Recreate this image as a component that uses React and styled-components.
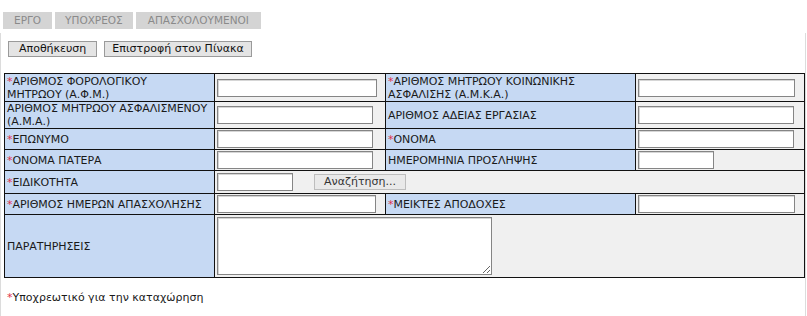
import React from "react";
import styled, { createGlobalStyle } from "styled-components";

const Global = createGlobalStyle`
  html, body { margin: 0; padding: 0; background: #fff; }
  body { font-family: "DejaVu Sans", Verdana, sans-serif; font-size: 11px; color: #111; }
`;

const Page = styled.div`
  width: 807px;
  height: 316px;
  overflow: hidden;
  box-sizing: border-box;
  padding-top: 12px;
`;

const Tabs = styled.div`
  display: flex;
  gap: 3px;
  padding-left: 3px;
  height: 17px;
`;

const Tab = styled.div`
  background: #d4d4d4;
  color: #8a8a8a;
  font-size: 10.5px;
  line-height: 17px;
  padding: 0 ${(p) => p.$pad}px;
`;

const Panel = styled.div`
  margin-top: 4px;
  margin-right: 1px;
  border-left: 1px solid #dcdcdc;
  border-right: 1px solid #dcdcdc;
  padding: 8px 0 0 3px;
  height: 300px;
`;

const Toolbar = styled.div`
  display: flex;
  gap: 7px;
  padding-left: 4px;
`;

const Button = styled.button`
  font-family: "DejaVu Sans", Verdana, sans-serif;
  font-size: 11px;
  color: #111;
  background: #e4e4e4;
  border: 1px solid #9a9a9a;
  height: 16px;
  padding: 0 ${(p) => p.$pad || 10}px;
  line-height: 14px;
  margin: 0;
`;

const SearchButton = styled(Button)`
  background: #e9e9e9;
  border-color: #bdbdbd;
  color: #333;
  margin-left: 21px;
  padding: 0 9px;
`;

const Table = styled.table`
  margin-top: 16px;
  border-collapse: collapse;
  table-layout: fixed;
  width: 800px;
  border: 1px solid #111;
`;

const Row = styled.tr`
  height: ${(p) => p.$h}px;
`;

const Label = styled.td`
  background: #c6d9f3;
  border: 1px solid #111;
  padding: 0 0 0 2px;
  vertical-align: middle;
  font-size: 11px;
  line-height: 13px;
  color: #1a1a1a;
  letter-spacing: -0.05px;
`;

const Field = styled.td`
  background: #f0f0f0;
  border: 1px solid #111;
  padding: 0 2px;
  vertical-align: middle;
`;

const Star = styled.span`
  color: #e0304a;
`;

const Input = styled.input`
  display: block;
  box-sizing: border-box;
  width: ${(p) => p.$w}px;
  height: ${(p) => p.$h || 18}px;
  border: 1px solid #858585;
  box-shadow: inset 1px 1px 0 #d6d6d6;
  background: #fff;
  margin: 0;
  padding: 0;
`;

const Inline = styled.div`
  display: flex;
  align-items: center;
`;

const TextArea = styled.textarea`
  display: block;
  box-sizing: border-box;
  width: 275px;
  height: 58px;
  border: 1px solid #858585;
  box-shadow: inset 1px 1px 0 #d6d6d6;
  background: #fff;
  margin: 0;
  padding: 0;
  resize: both;
`;

const Note = styled.div`
  margin-top: 13px;
  padding-left: 3px;
  font-size: 11px;
  color: #1a1a1a;
`;

const L = ({ req, children }) => (
  <Label>
    {req && <Star>*</Star>}
    {children}
  </Label>
);

export default function App() {
  return (
    <Page>
      <Global />
      <Tabs>
        <Tab $pad={11}>ΕΡΓΟ</Tab>
        <Tab $pad={10}>ΥΠΟΧΡΕΟΣ</Tab>
        <Tab $pad={12}>ΑΠΑΣΧΟΛΟΥΜΕΝΟΙ</Tab>
      </Tabs>
      <Panel>
        <Toolbar>
          <Button $pad={10}>Αποθήκευση</Button>
          <Button $pad={7}>Επιστροφή στον Πίνακα</Button>
        </Toolbar>
        <Table>
          <colgroup>
            <col style={{ width: 210 }} />
            <col style={{ width: 171 }} />
            <col style={{ width: 250 }} />
            <col style={{ width: 169 }} />
          </colgroup>
          <tbody>
            <Row $h={28}>
              <L req>ΑΡΙΘΜΟΣ ΦΟΡΟΛΟΓΙΚΟΥ<br />ΜΗΤΡΩΟΥ (Α.Φ.Μ.)</L>
              <Field><Input $w={160} /></Field>
              <L req>ΑΡΙΘΜΟΣ ΜΗΤΡΩΟΥ ΚΟΙΝΩΝΙΚΗΣ<br />ΑΣΦΑΛΙΣΗΣ (Α.Μ.Κ.Α.)</L>
              <Field><Input $w={157} /></Field>
            </Row>
            <Row $h={27}>
              <L>ΑΡΙΘΜΟΣ ΜΗΤΡΩΟΥ ΑΣΦΑΛΙΣΜΕΝΟΥ<br />(Α.Μ.Α.)</L>
              <Field><Input $w={156} /></Field>
              <L>ΑΡΙΘΜΟΣ ΑΔΕΙΑΣ ΕΡΓΑΣΙΑΣ</L>
              <Field><Input $w={156} /></Field>
            </Row>
            <Row $h={21}>
              <L req>ΕΠΩΝΥΜΟ</L>
              <Field><Input $w={156} /></Field>
              <L req>ΟΝΟΜΑ</L>
              <Field><Input $w={156} /></Field>
            </Row>
            <Row $h={21}>
              <L req>ΟΝΟΜΑ ΠΑΤΕΡΑ</L>
              <Field><Input $w={156} /></Field>
              <L>ΗΜΕΡΟΜΗΝΙΑ ΠΡΟΣΛΗΨΗΣ</L>
              <Field><Input $w={76} /></Field>
            </Row>
            <Row $h={23}>
              <L req>ΕΙΔΙΚΟΤΗΤΑ</L>
              <Field colSpan={3}>
                <Inline>
                  <Input $w={76} />
                  <SearchButton>Αναζήτηση...</SearchButton>
                </Inline>
              </Field>
            </Row>
            <Row $h={21}>
              <L req>ΑΡΙΘΜΟΣ ΗΜΕΡΩΝ ΑΠΑΣΧΟΛΗΣΗΣ</L>
              <Field><Input $w={159} /></Field>
              <L req>ΜΕΙΚΤΕΣ ΑΠΟΔΟΧΕΣ</L>
              <Field><Input $w={157} /></Field>
            </Row>
            <Row $h={63}>
              <L>ΠΑΡΑΤΗΡΗΣΕΙΣ</L>
              <Field colSpan={3}><TextArea /></Field>
            </Row>
          </tbody>
        </Table>
        <Note>
          <Star>*</Star>Υποχρεωτικό για την καταχώρηση
        </Note>
      </Panel>
    </Page>
  );
}
